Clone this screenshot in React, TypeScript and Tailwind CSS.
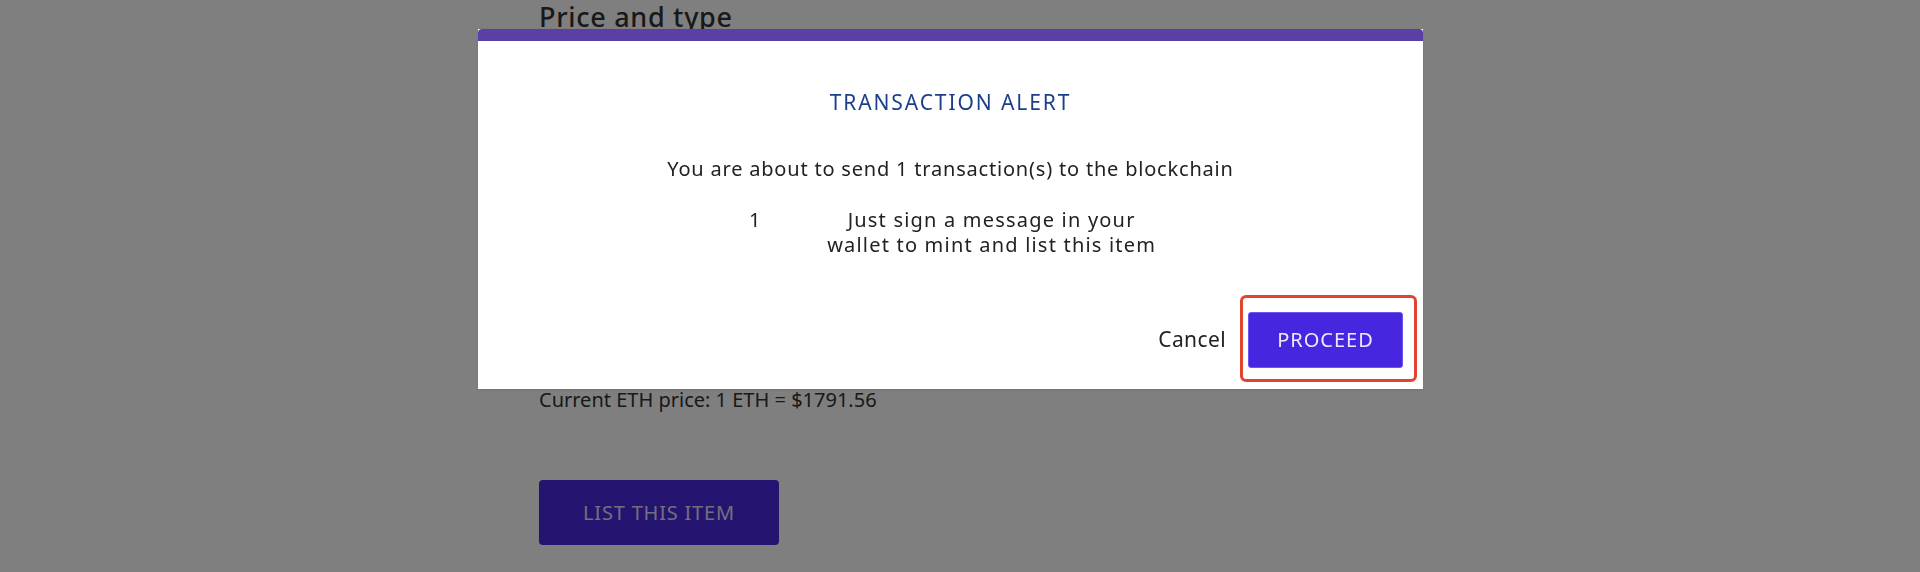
export default function App() {
  return (
    <div className="relative h-[572px] overflow-hidden bg-white font-['Noto_Sans',sans-serif]">
      <main className="pl-[539px] text-[#333]">
        <h2 className="text-[27px] leading-[34px] font-medium tracking-[0.7px]">Price and type</h2>
        <div className="h-[352px]" />
        <p className="text-[20px] leading-[28px]">Current ETH price: 1 ETH = $1791.56</p>
        <button className="mt-[66px] h-[65px] w-[240px] rounded-[4px] bg-[#4826df] text-[20px] tracking-[0.8px] text-white/85">
          LIST THIS ITEM
        </button>
      </main>

      <div className="fixed inset-0 bg-black/50 pl-[478px] pt-[29px]">
        <TransactionAlert />
      </div>
    </div>
  )
}

function TransactionAlert() {
  return (
    <div className="flex h-[360px] w-[945px] flex-col bg-white shadow-sm">
      <div className="h-[12px] rounded-t-[4px] bg-[#5a3fa6]" />
      <h3 className="mt-[46px] text-center text-[21px] leading-[30px] tracking-[1.9px] text-[#1d3f8a]">
        TRANSACTION ALERT
      </h3>
      <p className="mt-[37px] text-center text-[20px] leading-[30px] tracking-[0.8px] text-[#222]">
        You are about to send 1 transaction(s) to the blockchain
      </p>
      <div className="mt-[23px] flex gap-[60px] pl-[271px] text-[20px] leading-[25px] tracking-[1.2px] text-[#222]">
        <span>1</span>
        <span className="w-[340px] text-center">Just sign a message in your wallet to mint and list this item</span>
      </div>
      <div className="mt-auto mb-[21px] flex items-center justify-end gap-[22px] pr-[20px]">
        <button className="text-[21px] tracking-[0.4px] text-[#222]">Cancel</button>
        <div className="relative">
          <button className="h-[56px] w-[155px] rounded-[3px] border border-[#6b55ee] bg-[#4826df] text-[20px] tracking-[1px] text-white/90">
            PROCEED
          </button>
          <div className="pointer-events-none absolute -top-[17px] -bottom-[14px] -left-[8px] -right-[14px] rounded-[6px] border-[3px] border-[#e0452f]" />
        </div>
      </div>
    </div>
  )
}
